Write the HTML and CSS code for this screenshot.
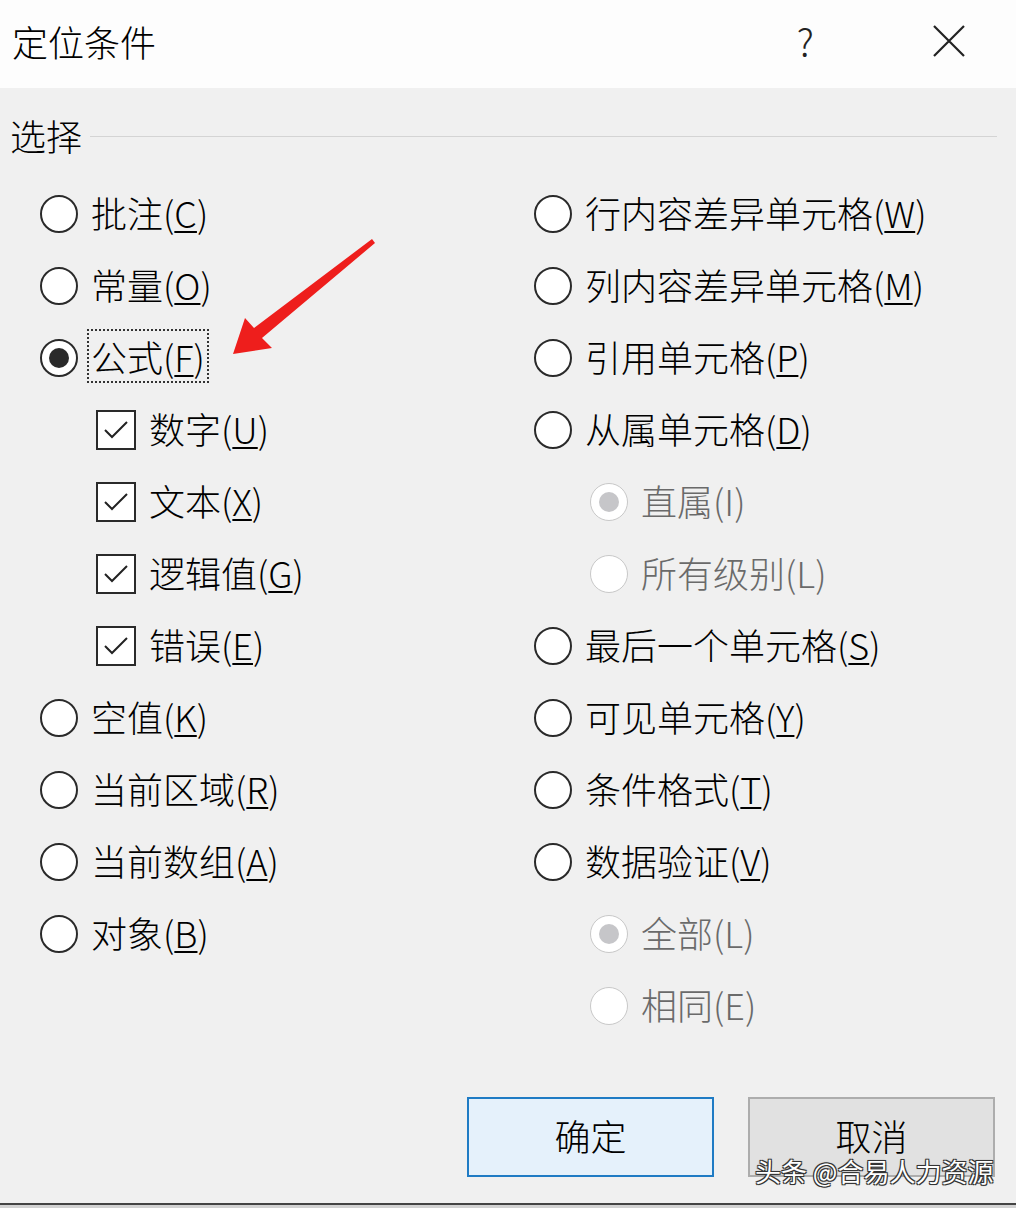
FILE: index.html
```
<!DOCTYPE html>
<html lang="zh-CN">
<head>
    <meta charset="UTF-8">
    <title>定位条件</title>
    <link rel="stylesheet" href="styles.css">
</head>
<body>
    <div class="dialog">
        <div class="title-bar">
            <span class="title">定位条件</span>
            <span class="help">?</span>
            <svg class="close" width="34" height="34" viewBox="0 0 34 34">
                <path d="M2 2 L32 32 M32 2 L2 32" stroke="#222" stroke-width="2.2" fill="none"/>
            </svg>
        </div>

        <div class="group-head">
            <span class="group-label">选择</span>
            <span class="group-line"></span>
        </div>

        <div class="options">
            <div class="col col-left">
                <div class="opt"><span class="radio"></span><span class="label">批注(<u>C</u>)</span></div>
                <div class="opt"><span class="radio"></span><span class="label">常量(<u>O</u>)</span></div>
                <div class="opt"><span class="radio checked"></span><span class="label focus">公式(<u>F</u>)</span></div>
                <div class="opt sub"><span class="check"><svg width="36" height="36" viewBox="0 0 36 36"><polyline points="7,18 14,25 29,10" fill="none" stroke="#222" stroke-width="2"/></svg></span><span class="label">数字(<u>U</u>)</span></div>
                <div class="opt sub"><span class="check"><svg width="36" height="36" viewBox="0 0 36 36"><polyline points="7,18 14,25 29,10" fill="none" stroke="#222" stroke-width="2"/></svg></span><span class="label">文本(<u>X</u>)</span></div>
                <div class="opt sub"><span class="check"><svg width="36" height="36" viewBox="0 0 36 36"><polyline points="7,18 14,25 29,10" fill="none" stroke="#222" stroke-width="2"/></svg></span><span class="label">逻辑值(<u>G</u>)</span></div>
                <div class="opt sub"><span class="check"><svg width="36" height="36" viewBox="0 0 36 36"><polyline points="7,18 14,25 29,10" fill="none" stroke="#222" stroke-width="2"/></svg></span><span class="label">错误(<u>E</u>)</span></div>
                <div class="opt"><span class="radio"></span><span class="label">空值(<u>K</u>)</span></div>
                <div class="opt"><span class="radio"></span><span class="label">当前区域(<u>R</u>)</span></div>
                <div class="opt"><span class="radio"></span><span class="label">当前数组(<u>A</u>)</span></div>
                <div class="opt"><span class="radio"></span><span class="label">对象(<u>B</u>)</span></div>
            </div>
            <div class="col col-right">
                <div class="opt"><span class="radio"></span><span class="label">行内容差异单元格(<u>W</u>)</span></div>
                <div class="opt"><span class="radio"></span><span class="label">列内容差异单元格(<u>M</u>)</span></div>
                <div class="opt"><span class="radio"></span><span class="label">引用单元格(<u>P</u>)</span></div>
                <div class="opt"><span class="radio"></span><span class="label">从属单元格(<u>D</u>)</span></div>
                <div class="opt sub disabled"><span class="radio checked"></span><span class="label">直属(I)</span></div>
                <div class="opt sub disabled"><span class="radio"></span><span class="label">所有级别(L)</span></div>
                <div class="opt"><span class="radio"></span><span class="label">最后一个单元格(<u>S</u>)</span></div>
                <div class="opt"><span class="radio"></span><span class="label">可见单元格(<u>Y</u>)</span></div>
                <div class="opt"><span class="radio"></span><span class="label">条件格式(<u>T</u>)</span></div>
                <div class="opt"><span class="radio"></span><span class="label">数据验证(<u>V</u>)</span></div>
                <div class="opt sub disabled"><span class="radio checked"></span><span class="label">全部(L)</span></div>
                <div class="opt sub disabled"><span class="radio"></span><span class="label">相同(E)</span></div>
            </div>
        </div>

        <div class="buttons">
            <button class="btn btn-default">确定</button>
            <button class="btn">取消</button>
        </div>
        <div class="bottom-edge"></div>

        <!-- annotation arrow pointing at 公式 -->
        <svg class="arrow" width="152" height="126" viewBox="0 0 152 126">
            <polygon points="5,120 17,84 26,94 144,5 147,9 34,104 44,114" fill="#ee1e1c"/>
        </svg>
        <div class="watermark">头条 @合易人力资源</div>
    </div>
</body>
</html>
```

FILE: styles.css
```
* {
    margin: 0;
    padding: 0;
    box-sizing: border-box;
    font-family: "Noto Sans CJK SC", "Noto Sans", sans-serif;
    font-weight: 300;
}

body {
    background-color: #f0f0f0;
    color: #000;
}

.dialog {
    position: relative;
    width: 1016px;
    height: 1208px;
    background-color: #f0f0f0;
}

.title-bar {
    height: 88px;
    background-color: #fdfdfd;
    display: flex;
    align-items: center;
    padding-left: 12px;
    padding-bottom: 6px;
}

.title {
    font-size: 36px;
    line-height: 36px;
    flex: 1;
}

.help {
    font-size: 38px;
    line-height: 42px;
    font-weight: 200;
    color: #222;
    margin-right: 118px;
}

.close {
    margin-right: 50px;
}

.group-head {
    display: flex;
    align-items: center;
    margin: 30px 19px 24px 10px;
    height: 36px;
}

.group-label {
    font-size: 36px;
    line-height: 36px;
    margin-bottom: 3px;
}

.group-line {
    flex: 1;
    height: 1px;
    background-color: #d4d4d4;
    margin-left: 8px;
}

.options {
    display: flex;
    padding-left: 40px;
    height: 864px;
}

.col-left {
    width: 494px;
}

.opt {
    display: flex;
    align-items: center;
    height: 72px;
    gap: 13px;
}

.opt.sub {
    padding-left: 56px;
}

.label {
    font-size: 36px;
    line-height: 36px;
    white-space: nowrap;
    margin-bottom: 4px;
}

.label u {
    text-decoration-thickness: 2px;
    text-underline-offset: 3px;
}

.radio {
    width: 38px;
    height: 38px;
    border: 2px solid #2a2a2a;
    border-radius: 50%;
    background-color: #fff;
    display: flex;
    align-items: center;
    justify-content: center;
    flex-shrink: 0;
}

.radio.checked::after {
    content: "";
    width: 20px;
    height: 20px;
    border-radius: 50%;
    background-color: #2a2a2a;
}

.disabled .radio {
    border: 1.5px solid #c8c8c8;
}

.disabled .radio.checked::after {
    background-color: #c6c6c9;
}

.disabled .label {
    color: #6a6a6a;
}

.check {
    width: 40px;
    height: 40px;
    border: 2px solid #2a2a2a;
    background-color: #fff;
    flex-shrink: 0;
}

.check svg {
    display: block;
}

.focus {
    border: 2px dotted #333;
    padding: 7px 2px;
    margin: -9px -4px -5px;
}

.buttons {
    display: flex;
    justify-content: flex-end;
    gap: 34px;
    margin-top: 55px;
    padding-right: 21px;
}

.btn {
    width: 247px;
    height: 80px;
    font-size: 36px;
    color: #000;
    background-color: #e1e1e1;
    border: 2px solid #adadad;
    padding-bottom: 4px;
}

.btn-default {
    background-color: #e5f1fb;
    border-color: #1f7bc4;
}

.bottom-edge {
    margin-top: 26px;
    height: 5px;
    border-top: 2px solid #444;
    background-color: #d2d2d2;
}

.arrow {
    position: absolute;
    left: 228px;
    top: 234px;
}

.watermark {
    position: absolute;
    left: 755px;
    top: 1154px;
    font-size: 26px;
    line-height: 34px;
    color: #fff;
    font-weight: 400;
    text-shadow: -1px -1px 0 #333, 1px -1px 0 #333, -1px 1px 0 #333, 1px 1px 0 #333, 0 0 2px #000;
}
```
